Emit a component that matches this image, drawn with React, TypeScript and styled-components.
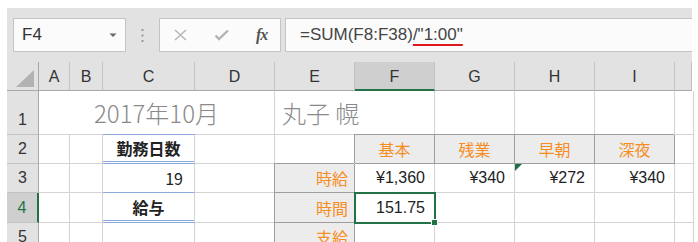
import React from 'react';
import styled, { createGlobalStyle, css } from 'styled-components';

const GREEN = '#217346';
const ORANGE = '#f78d1f';
const RULE = '#8eaadc';
const GRID = '#d4d4d4';
const CHROME = '#e2e2e2';

const COLS = [32, 31, 33, 92, 80, 80, 80, 80, 80, 80, 17];
const ROWS = [29, 44, 29, 29, 30, 29];

const GlobalStyle = createGlobalStyle`
  html, body { margin: 0; padding: 0; background: #fff; }
  body {
    font-family: "Liberation Sans", "Noto Sans CJK JP", sans-serif;
    color: #222;
    overflow: hidden;
  }
`;

const Frame = styled.div`
  width: 698px;
  box-sizing: border-box;
  padding: 8px 6px 0 7px;
`;

const Toolbar = styled.div`
  display: flex;
  align-items: center;
  height: 54px;
  padding-left: 6px;
  background: ${CHROME};
`;

const Box = styled.div`
  height: 34px;
  box-sizing: border-box;
  border: 1px solid #c4c4c4;
  background: #fbfbfb;
  display: flex;
  align-items: center;
`;

const NameBox = styled(Box)`
  width: 113px;
  justify-content: space-between;
  padding: 0 8px 0 8px;
  font-size: 17px;
  color: #333;
`;

const Grip = styled.div`
  width: 33px;
  display: flex;
  justify-content: center;
`;

const FxBox = styled(Box)`
  width: 122px;
  padding-left: 14px;
  gap: 27px;
`;

const FxLabel = styled.span`
  font-family: "Liberation Serif", serif;
  font-style: italic;
  font-weight: bold;
  font-size: 16px;
  color: #555;
  letter-spacing: -1px;
`;

const FormulaBox = styled(Box)`
  flex: 1;
  margin-left: 4px;
  padding-left: 14px;
  font-size: 17px;
  color: #444;
  border-right: none;
`;

const Marked = styled.span`
  text-decoration: underline;
  text-decoration-color: #e0181b;
  text-decoration-thickness: 2px;
  text-underline-offset: 4px;
`;

const Sheet = styled.div`
  display: grid;
  grid-template-columns: ${COLS.map((w) => `${w}px`).join(' ')};
  grid-template-rows: ${ROWS.map((h) => `${h}px`).join(' ')};
  background: #fff;
`;

const Corner = styled.div`
  position: relative;
  background: ${CHROME};
  border-right: 1px solid #a8a8a8;
  border-bottom: 1px solid #a8a8a8;
  svg { position: absolute; right: 4px; bottom: 3px; }
`;

const ColHead = styled.div<{ $active?: boolean }>`
  display: flex;
  align-items: center;
  justify-content: center;
  box-sizing: border-box;
  padding-top: 2px;
  background: ${CHROME};
  border-right: 1px solid #c2c2c2;
  border-bottom: 1px solid #a8a8a8;
  font-size: 16px;
  color: #333;
  ${(p) =>
    p.$active &&
    css`
      background: #cfcfcf;
      border-bottom: 2px solid ${GREEN};
    `}
`;

const RowHead = styled.div<{ $active?: boolean }>`
  display: flex;
  align-items: flex-end;
  justify-content: center;
  box-sizing: border-box;
  padding-bottom: 5px;
  background: ${CHROME};
  border-right: 1px solid #a8a8a8;
  border-bottom: 1px solid #c2c2c2;
  font-size: 16px;
  color: #333;
  ${(p) =>
    p.$active &&
    css`
      background: #cfcfcf;
      border-right: 2px solid ${GREEN};
      color: ${GREEN};
    `}
`;

type Align = 'left' | 'center' | 'right';

const Cell = styled.div<{ $align?: Align; $span?: number }>`
  position: relative;
  display: flex;
  align-items: center;
  justify-content: ${(p) =>
    p.$align === 'right' ? 'flex-end' : p.$align === 'center' ? 'center' : 'flex-start'};
  box-sizing: border-box;
  min-width: 0;
  padding: 0 9px;
  border-right: 1px solid ${GRID};
  border-bottom: 1px solid ${GRID};
  font-size: 16px;
  white-space: nowrap;
  ${(p) => p.$span && css`grid-column: span ${p.$span};`}
`;

const Title = styled(Cell)`
  padding: 0 7px;
  font-family: "Noto Sans CJK JP", "Liberation Sans", sans-serif;
  font-weight: 300;
  font-size: 24px;
  color: #8a8a8a;
`;

const Summary = styled(Cell)<{ $bold?: boolean; $rule: 'single' | 'double'; $cap?: boolean }>`
  padding: 0 11px;
  font-family: "Noto Sans CJK JP", "Liberation Sans", sans-serif;
  font-weight: ${(p) => (p.$bold ? 700 : 400)};
  border-bottom: ${(p) => (p.$rule === 'double' ? `3px double ${RULE}` : `1px solid ${RULE}`)};
  ${(p) =>
    p.$cap &&
    css`
      z-index: 1;
      box-shadow: 0 -1px 0 ${RULE};
    `}
`;

const Label = styled(Cell)`
  z-index: 1;
  padding: 0 6px;
  background: #ececec;
  color: ${ORANGE};
  font-family: "Noto Sans CJK JP", "Liberation Sans", sans-serif;
  border-right: 1px solid #9e9e9e;
  border-bottom: 1px solid #9e9e9e;
  box-shadow: -1px -1px 0 #9e9e9e;
`;

const Value = styled(Cell)<{ $flag?: boolean; $selected?: boolean }>`
  ${(p) =>
    p.$flag &&
    css`
      &::before {
        content: '';
        position: absolute;
        top: 0;
        left: 0;
        border-top: 7px solid #1e7145;
        border-right: 7px solid transparent;
      }
    `}
  ${(p) =>
    p.$selected &&
    css`
      z-index: 2;
      outline: 2px solid ${GREEN};
      outline-offset: -1px;
      &::after {
        content: '';
        position: absolute;
        right: -4px;
        bottom: -4px;
        width: 5px;
        height: 5px;
        background: ${GREEN};
        border: 1px solid #fff;
      }
    `}
`;

const letters = ['A', 'B', 'C', 'D', 'E', 'F', 'G', 'H', 'I', ''];
const rates = ['¥1,360', '¥340', '¥272', '¥340'];
const kinds = ['基本', '残業', '早朝', '深夜'];

export default function App() {
  return (
    <>
      <GlobalStyle />
      <Frame>
        <Toolbar>
          <NameBox>
            <span>F4</span>
            <svg width="8" height="5" viewBox="0 0 8 5">
              <path d="M0.5 0.5 L4 4 L7.5 0.5 Z" fill="#666" />
            </svg>
          </NameBox>
          <Grip>
            <svg width="3" height="13" viewBox="0 0 3 13">
              <rect x="0.5" y="0" width="2" height="2" fill="#9a9a9a" />
              <rect x="0.5" y="5.5" width="2" height="2" fill="#9a9a9a" />
              <rect x="0.5" y="11" width="2" height="2" fill="#9a9a9a" />
            </svg>
          </Grip>
          <FxBox>
            <svg width="13" height="12" viewBox="0 0 13 12">
              <path d="M1 1 L12 11 M12 1 L1 11" stroke="#b4b4b4" strokeWidth="1.4" />
            </svg>
            <svg width="15" height="12" viewBox="0 0 15 12">
              <path d="M1.5 6.5 L5 10 L14 1.5" stroke="#b4b4b4" strokeWidth="2.4" fill="none" />
            </svg>
            <FxLabel>fx</FxLabel>
          </FxBox>
          <FormulaBox>
            =SUM(F8:F38)<Marked>/"1:00"</Marked>
          </FormulaBox>
        </Toolbar>

        <Sheet>
          <Corner>
            <svg width="18" height="17" viewBox="0 0 18 17">
              <path d="M18 0 L18 17 L0 17 Z" fill="#b2b2b2" />
            </svg>
          </Corner>
          {letters.map((l, i) => (
            <ColHead key={i} $active={l === 'F'}>
              {l}
            </ColHead>
          ))}

          <RowHead>1</RowHead>
          <Title $span={4} $align="center">2017年10月</Title>
          <Title $span={2}>丸子 幌</Title>
          <Cell />
          <Cell />
          <Cell />
          <Cell />

          <RowHead>2</RowHead>
          <Cell />
          <Cell />
          <Summary $align="center" $bold $rule="double" $cap>
            勤務日数
          </Summary>
          <Cell />
          <Cell />
          {kinds.map((k) => (
            <Label key={k} $align="center">
              {k}
            </Label>
          ))}
          <Cell />

          <RowHead>3</RowHead>
          <Cell />
          <Cell />
          <Summary $align="right" $rule="single">
            19
          </Summary>
          <Cell />
          <Label $align="right">時給</Label>
          {rates.map((r, i) => (
            <Value key={i} $align="right" $flag={i === 2}>
              {r}
            </Value>
          ))}
          <Cell />

          <RowHead $active>4</RowHead>
          <Cell />
          <Cell />
          <Summary $align="center" $bold $rule="double">
            給与
          </Summary>
          <Cell />
          <Label $align="right">時間</Label>
          <Value $align="right" $selected>
            151.75
          </Value>
          <Cell />
          <Cell />
          <Cell />
          <Cell />

          <RowHead>5</RowHead>
          <Cell />
          <Cell />
          <Cell />
          <Cell />
          <Label $align="right">支給</Label>
          <Cell />
          <Cell />
          <Cell />
          <Cell />
          <Cell />
        </Sheet>
      </Frame>
    </>
  );
}
